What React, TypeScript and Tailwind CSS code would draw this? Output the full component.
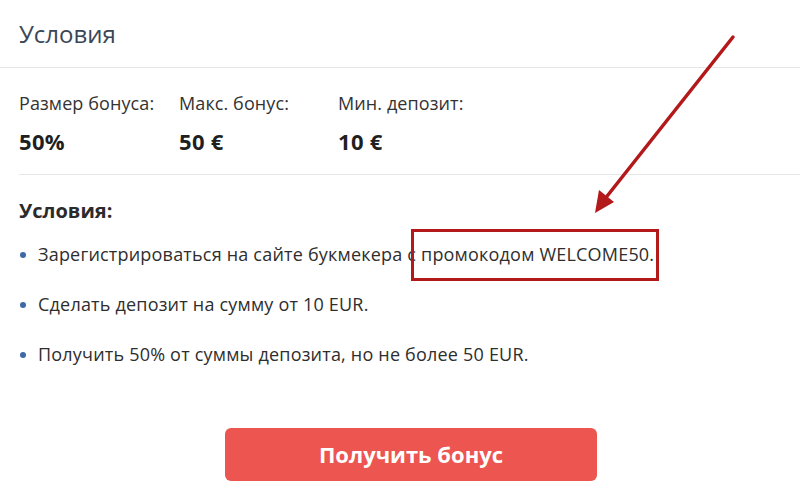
export default function App() {
  const items = [
    "Зарегистрироваться на сайте букмекера с промокодом WELCOME50.",
    "Сделать депозит на сумму от 10 EUR.",
    "Получить 50% от суммы депозита, но не более 50 EUR.",
  ];
  const stats = [
    { label: "Размер бонуса:", value: "50%", w: "w-[160px]" },
    { label: "Макс. бонус:", value: "50 €", w: "w-[159px]" },
    { label: "Мин. депозит:", value: "10 €", w: "w-[160px]" },
  ];

  return (
    <div className="relative h-[501px] w-[800px] overflow-hidden bg-white font-['Open_Sans',Arial,sans-serif] text-[#2b2b2b]">
      <div className="flex h-[68px] items-center border-b border-[#e6e6e6] pl-[19px]">
        <h1 className="text-[24px] font-normal text-[#3a4656]">Условия</h1>
      </div>

      <div className="ml-[19px] border-b border-[#e6e6e6] pb-[22px] pt-[24px]">
        <div className="flex">
          {stats.map((s) => (
            <div key={s.label} className={s.w}>
              <div className="text-[18px] leading-[22px] tracking-[0.1px] text-[#333]">{s.label}</div>
              <div className="mt-[16px] text-[22px] font-bold leading-[22px] tracking-[0.3px] text-[#1f1f1f]">{s.value}</div>
            </div>
          ))}
        </div>
      </div>

      <div className="pl-[19px] pt-[24px]">
        <h2 className="text-[20px] font-bold leading-[24px] text-[#2b2b2b]">Условия:</h2>
        <ul className="mt-[20px] flex flex-col gap-[27px]">
          {items.map((t) => (
            <li key={t} className="flex items-center text-[18px] leading-[23px] tracking-[0.2px] text-[#2e2e2e]">
              <span className="ml-[1px] mr-[12px] h-[6px] w-[6px] rounded-full bg-[#3f69a6]" />
              {t}
            </li>
          ))}
        </ul>
      </div>

      <div className="mt-[62px] flex justify-center">
        <button className="ml-[22px] h-[53px] w-[372px] rounded-[6px] bg-[#ec5550] text-[22px] font-bold text-white">
          Получить бонус
        </button>
      </div>

      {/* аннотация: рамка и стрелка поверх текста */}
      <div className="absolute left-[411px] top-[229px] h-[52px] w-[248px] border-[3px] border-[#b3181a]" />
      <svg className="absolute left-0 top-0" width="800" height="501" viewBox="0 0 800 501">
        <line x1="733" y1="37" x2="604" y2="200" stroke="#b3181a" strokeWidth="3.5" strokeLinecap="round" />
        <polygon points="595,213 599,190 614,202" fill="#b3181a" />
      </svg>
    </div>
  );
}
